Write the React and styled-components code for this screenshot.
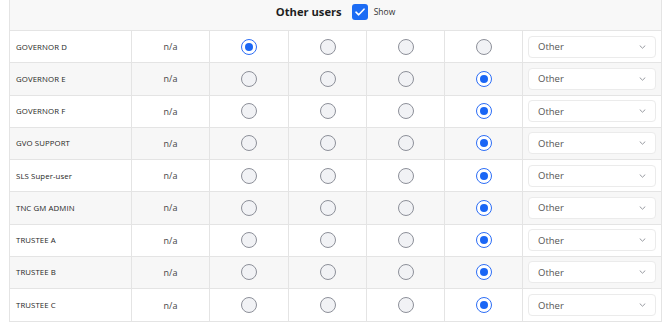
import React from "react";
import styled, { createGlobalStyle } from "styled-components";

const Global = createGlobalStyle`
  html, body { margin: 0; padding: 0; background: #ffffff; }
  body { font-family: "Open Sans", "Liberation Sans", sans-serif; color: #222; }
`;

const Page = styled.div`
  padding-left: 9px;
  width: 653px;
`;

const Table = styled.div`
  border-left: 1px solid #e4e4e4;
  border-right: 1px solid #e4e4e4;
  border-bottom: 1px solid #e4e4e4;
`;

const Header = styled.div`
  height: 31px;
  box-sizing: border-box;
  background: #f8f8f8;
  border-bottom: 1px solid #e4e4e4;
  display: flex;
  align-items: center;
  justify-content: center;
  padding-bottom: 7px;
`;

const Title = styled.span`
  font-size: 11.2px;
  font-weight: 700;
  color: #1e1e1e;
  margin-right: 10px;
`;

const CheckBox = styled.span`
  width: 16px;
  height: 16px;
  border-radius: 3px;
  background: #1c6cf4;
  display: inline-flex;
  align-items: center;
  justify-content: center;
  margin-right: 6px;
`;

const ShowLabel = styled.span`
  font-size: 8.5px;
  color: #333;
`;

const Row = styled.div`
  display: grid;
  grid-template-columns: 122px 78px 79px 78px 78px 78px 1fr;
  height: 32.25px;
  box-sizing: border-box;
  border-bottom: 1px solid #e4e4e4;
  background: ${(p) => (p.$alt ? "#f7f7f7" : "#ffffff")};
  &:last-child { border-bottom: none; }
`;

const Cell = styled.div`
  display: flex;
  align-items: center;
  justify-content: ${(p) => (p.$left ? "flex-start" : "center")};
  padding-left: ${(p) => (p.$left ? "6px" : "0")};
  border-right: ${(p) => (p.$last ? "none" : "1px solid #e4e4e4")};
  box-sizing: border-box;
  min-width: 0;
`;

const Name = styled.span`
  font-size: 7.8px;
  color: #262626;
  letter-spacing: 0.1px;
`;

const NA = styled.span`
  font-size: 9px;
  color: #444;
`;

const Radio = styled.span`
  width: 16px;
  height: 16px;
  border-radius: 50%;
  box-sizing: border-box;
  border: 1px solid ${(p) => (p.$on ? "#2d6ef6" : "#8d9099")};
  background: ${(p) => (p.$on ? "#ffffff" : "#f1f2f5")};
  display: inline-flex;
  align-items: center;
  justify-content: center;
  &::after {
    content: "";
    display: ${(p) => (p.$on ? "block" : "none")};
    width: 8px;
    height: 8px;
    border-radius: 50%;
    background: #1a66f5;
  }
`;

const Select = styled.div`
  flex: 1;
  margin: 0 5px;
  height: 22px;
  box-sizing: border-box;
  background: #ffffff;
  border: 1px solid #ebebeb;
  border-radius: 4px;
  display: flex;
  align-items: center;
  justify-content: space-between;
  padding: 0 9px 0 9px;
`;

const SelectText = styled.span`
  font-size: 9.5px;
  color: #555;
`;

const users = [
  ["GOVERNOR D", 0],
  ["GOVERNOR E", 3],
  ["GOVERNOR F", 3],
  ["GVO SUPPORT", 3],
  ["SLS Super-user", 3],
  ["TNC GM ADMIN", 3],
  ["TRUSTEE A", 3],
  ["TRUSTEE B", 3],
  ["TRUSTEE C", 3],
];

const Chevron = () => (
  <svg width="7" height="4" viewBox="0 0 7 4" fill="none">
    <path d="M1 0.8l2.5 2.4 2.5-2.4" stroke="#8a8d94" strokeWidth="0.9" strokeLinecap="round" strokeLinejoin="round" />
  </svg>
);

export default function App() {
  return (
    <Page>
      <Global />
      <Table>
        <Header>
          <Title>Other users</Title>
          <CheckBox>
            <svg width="10" height="8" viewBox="0 0 10 8" fill="none">
              <path d="M1 4.2l2.7 2.6L9 1.2" stroke="#fff" strokeWidth="1.6" strokeLinecap="round" strokeLinejoin="round" />
            </svg>
          </CheckBox>
          <ShowLabel>Show</ShowLabel>
        </Header>
        {users.map(([name, sel], i) => (
          <Row key={name} $alt={i % 2 === 1}>
            <Cell $left>
              <Name>{name}</Name>
            </Cell>
            <Cell>
              <NA>n/a</NA>
            </Cell>
            {[0, 1, 2, 3].map((c) => (
              <Cell key={c}>
                <Radio $on={c === sel} />
              </Cell>
            ))}
            <Cell $last>
              <Select>
                <SelectText>Other</SelectText>
                <Chevron />
              </Select>
            </Cell>
          </Row>
        ))}
      </Table>
    </Page>
  );
}
